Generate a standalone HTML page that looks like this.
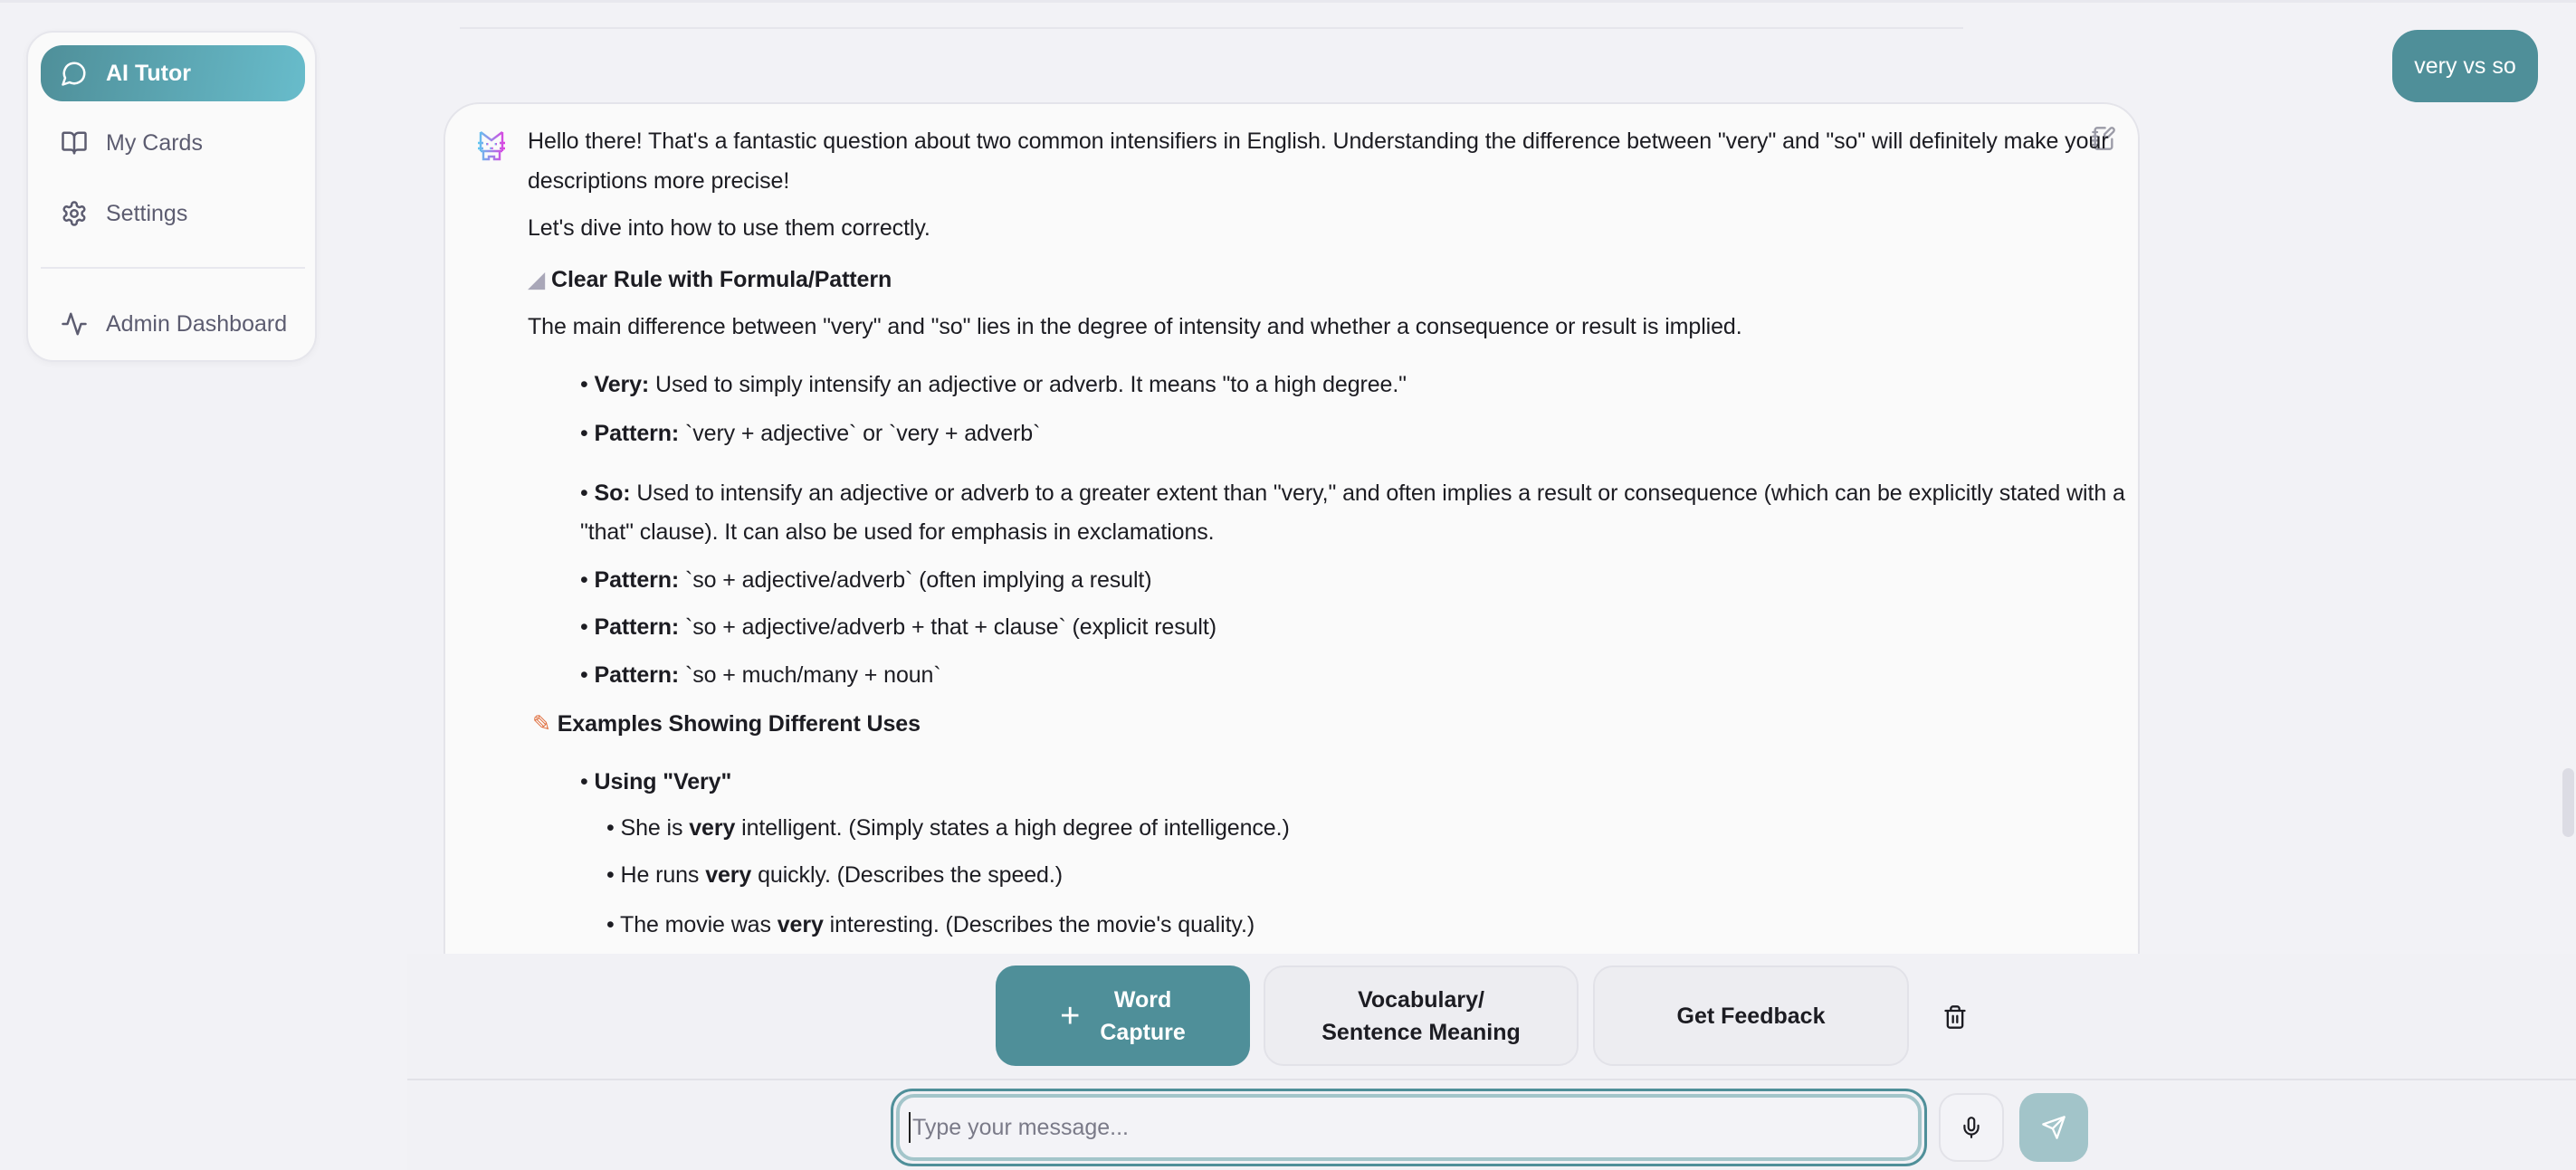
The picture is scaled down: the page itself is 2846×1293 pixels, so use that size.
<!DOCTYPE html>
<html><head><meta charset="utf-8"><style>
*{margin:0;padding:0;box-sizing:border-box}
body{width:2846px;height:1293px;overflow:hidden;background:#f2f2f6;font-family:"Liberation Sans",sans-serif;color:#1c1c22;position:relative}
.abs{position:absolute}
.side{left:29px;top:34px;width:321px;height:366px;background:#fafafa;border:2px solid #e6e6ec;border-radius:30px;box-shadow:0 2px 8px rgba(0,0,0,.04)}
.nav{position:absolute;left:14px;width:292px;height:62px;border-radius:24px;display:flex;align-items:center;font-size:25px;color:#5c5c70}
.nav svg{margin-left:22px;margin-right:20px}
.act{background:linear-gradient(100deg,#4f8f99,#68bccb);color:#fff;font-weight:bold}
.card{left:490px;top:113px;width:1874px;height:1000px;background:#fafafa;border:2px solid #e4e4ea;border-radius:40px}
.l{position:absolute;white-space:nowrap;font-size:25px;line-height:36px;letter-spacing:-0.1px}
b{font-weight:bold}
.btn{position:absolute;top:1067px;height:111px;border-radius:22px;display:flex;align-items:center;justify-content:center;text-align:center;font-size:25px;line-height:36px;font-weight:bold}
</style></head><body>
<div class="abs" style="left:0;top:0;width:2846px;height:3px;background:#e8e8ee"></div>
<div class="abs" style="left:508px;top:30px;width:1661px;height:2px;background:#e6e6ec"></div>

<div class="abs side">
 <div class="nav act" style="top:14px">
  <svg width="30" height="30" viewBox="0 0 24 24" fill="none" stroke="#fff" stroke-width="2" stroke-linecap="round" stroke-linejoin="round"><path d="M7.9 20A9 9 0 1 0 4 16.1L2 22Z"/></svg>AI Tutor</div>
 <div class="nav" style="top:91px">
  <svg width="30" height="30" viewBox="0 0 24 24" fill="none" stroke="#5c5c70" stroke-width="2" stroke-linecap="round" stroke-linejoin="round"><path d="M12 7v14"/><path d="M3 18a1 1 0 0 1-1-1V4a1 1 0 0 1 1-1h5a4 4 0 0 1 4 4 4 4 0 0 1 4-4h5a1 1 0 0 1 1 1v13a1 1 0 0 1-1 1h-6a3 3 0 0 0-3 3 3 3 0 0 0-3-3z"/></svg>My Cards</div>
 <div class="nav" style="top:169px">
  <svg width="30" height="30" viewBox="0 0 24 24" fill="none" stroke="#5c5c70" stroke-width="2" stroke-linecap="round" stroke-linejoin="round"><path d="M12.22 2h-.44a2 2 0 0 0-2 2v.18a2 2 0 0 1-1 1.730l-.43.25a2 2 0 0 1-2 0l-.15-.08a2 2 0 0 0-2.73.73l-.22.38a2 2 0 0 0 .73 2.73l.15.1a2 2 0 0 1 1 1.72v.51a2 2 0 0 1-1 1.74l-.15.09a2 2 0 0 0-.73 2.73l.22.38a2 2 0 0 0 2.73.73l.15-.08a2 2 0 0 1 2 0l.43.25a2 2 0 0 1 1 1.73V20a2 2 0 0 0 2 2h.44a2 2 0 0 0 2-2v-.18a2 2 0 0 1 1-1.73l.43-.25a2 2 0 0 1 2 0l.15.08a2 2 0 0 0 2.73-.73l.22-.39a2 2 0 0 0-.73-2.73l-.15-.08a2 2 0 0 1-1-1.74v-.5a2 2 0 0 1 1-1.74l.15-.09a2 2 0 0 0 .73-2.73l-.22-.38a2 2 0 0 0-2.73-.73l-.15.08a2 2 0 0 1-2 0l-.43-.25a2 2 0 0 1-1-1.73V4a2 2 0 0 0-2-2z"/><circle cx="12" cy="12" r="3"/></svg>Settings</div>
 <div class="abs" style="left:14px;top:259px;width:292px;height:2px;background:#e8e8ee"></div>
 <div class="nav" style="top:291px">
  <svg width="30" height="30" viewBox="0 0 24 24" fill="none" stroke="#5c5c70" stroke-width="2" stroke-linecap="round" stroke-linejoin="round"><path d="M22 12h-4l-3 9L9 3l-3 9H2"/></svg>Admin Dashboard</div>
</div>

<div class="abs" style="left:2643px;top:33px;width:161px;height:80px;background:#4f8f99;border-radius:28px;color:#fff;font-size:25px;display:flex;align-items:center;justify-content:center">very vs so</div>

<div class="abs card"></div>
<svg class="abs" style="left:522px;top:140px" width="42" height="42" viewBox="0 0 14 14">
 <defs><linearGradient id="g" x1="0" x2="1"><stop offset="0" stop-color="#5cc8f0"/><stop offset="1" stop-color="#e040e0"/></linearGradient></defs>
 <g fill="none" stroke="url(#g)" stroke-width="0.8">
 <path d="M3 2v7M11 2v7M3 2l4 3 4-3M3 9h8M4 9v3h2v-1h2v1h2V9M2 6h2M10 6h2M2 8h2M10 8h2"/>
 </g><g fill="url(#g)"><rect x="5" y="6" width="0.8" height="0.8"/><rect x="8.2" y="6" width="0.8" height="0.8"/><rect x="6.4" y="7.6" width="1.2" height="0.7"/></g>
</svg>
<svg class="abs" style="left:2310px;top:138px" width="28" height="30" viewBox="0 0 24 24" fill="none" stroke="#9a9aa6" stroke-width="2" stroke-linecap="round" stroke-linejoin="round"><path d="M13.4 2H6a2 2 0 0 0-2 2v16a2 2 0 0 0 2 2h12a2 2 0 0 0 2-2v-7.4"/><path d="M2 6h4M2 10h4M2 14h4M2 18h4"/><path d="M21.4 5.6a2.1 2.1 0 1 0-3-3L13 8v3h3z"/></svg>

<div class="l" style="left:583px;top:138px">Hello there! That's a fantastic question about two common intensifiers in English. Understanding the difference between "very" and "so" will definitely make your</div>
<div class="l" style="left:583px;top:182px">descriptions more precise!</div>
<div class="l" style="left:583px;top:234px">Let's dive into how to use them correctly.</div>
<div class="l" style="left:583px;top:291px"><span style="color:#a9a7b8">&#9698;</span>&nbsp;<b>Clear Rule with Formula/Pattern</b></div>
<div class="l" style="left:583px;top:343px">The main difference between "very" and "so" lies in the degree of intensity and whether a consequence or result is implied.</div>
<div class="l" style="left:641px;top:407px">• <b>Very:</b> Used to simply intensify an adjective or adverb. It means "to a high degree."</div>
<div class="l" style="left:641px;top:461px">• <b>Pattern:</b> `very + adjective` or `very + adverb`</div>
<div class="l" style="left:641px;top:527px">• <b>So:</b> Used to intensify an adjective or adverb to a greater extent than "very," and often implies a result or consequence (which can be explicitly stated with a</div>
<div class="l" style="left:641px;top:570px">"that" clause). It can also be used for emphasis in exclamations.</div>
<div class="l" style="left:641px;top:623px">• <b>Pattern:</b> `so + adjective/adverb` (often implying a result)</div>
<div class="l" style="left:641px;top:675px">• <b>Pattern:</b> `so + adjective/adverb + that + clause` (explicit result)</div>
<div class="l" style="left:641px;top:728px">• <b>Pattern:</b> `so + much/many + noun`</div>
<div class="l" style="left:588px;top:782px"><span style="color:#e07040">&#9998;</span>&nbsp;<b>Examples Showing Different Uses</b></div>
<div class="l" style="left:641px;top:846px">• <b>Using "Very"</b></div>
<div class="l" style="left:670px;top:897px">• She is <b>very</b> intelligent. (Simply states a high degree of intelligence.)</div>
<div class="l" style="left:670px;top:949px">• He runs <b>very</b> quickly. (Describes the speed.)</div>
<div class="l" style="left:670px;top:1004px">• The movie was <b>very</b> interesting. (Describes the movie's quality.)</div>

<div class="abs" style="left:450px;top:1054px;width:2396px;height:239px;background:#f1f1f5"></div>
<div class="btn" style="left:1100px;width:281px;background:#4f8f99;color:#fff"><span style="font-size:38px;font-weight:normal;margin-right:22px">+</span><span>Word<br>Capture</span></div>
<div class="btn" style="left:1396px;width:348px;background:#ededf1;border:2px solid #e2e2e8">Vocabulary/<br>Sentence Meaning</div>
<div class="btn" style="left:1760px;width:349px;background:#ededf1;border:2px solid #e2e2e8">Get Feedback</div>
<svg class="abs" style="left:2146px;top:1108px" width="28" height="32" viewBox="0 0 24 24" fill="none" stroke="#1c1c22" stroke-width="2" stroke-linecap="round" stroke-linejoin="round"><path d="M3 6h18M19 6v14a2 2 0 0 1-2 2H7a2 2 0 0 1-2-2V6M8 6V4a2 2 0 0 1 2-2h4a2 2 0 0 1 2 2v2M10 11v6M14 11v6"/></svg>
<div class="abs" style="left:450px;top:1192px;width:2396px;height:2px;background:#e2e2e8"></div>

<div class="abs" style="left:984px;top:1203px;width:1145px;height:86px;border:3px solid #4f8f99;border-radius:24px;padding:3px"><div style="width:100%;height:100%;border:4px solid #a3c5ca;border-radius:20px;background:#f3f3f7;display:flex;align-items:center;padding-left:10px;font-size:25px;color:#7a7a88"><span style="width:2px;height:34px;background:#222;margin-right:2px"></span>Type your message...</div></div>
<div class="abs" style="left:2142px;top:1208px;width:72px;height:76px;border:2px solid #e2e2e8;border-radius:20px;background:#f3f3f7;display:flex;align-items:center;justify-content:center"><svg width="26" height="30" viewBox="0 0 24 24" fill="none" stroke="#1c1c22" stroke-width="2" stroke-linecap="round"><path d="M12 2a3 3 0 0 0-3 3v7a3 3 0 0 0 6 0V5a3 3 0 0 0-3-3z"/><path d="M19 10v2a7 7 0 0 1-14 0v-2M12 19v3"/></svg></div>
<div class="abs" style="left:2231px;top:1208px;width:76px;height:76px;border-radius:20px;background:#a2c4c9;display:flex;align-items:center;justify-content:center"><svg width="28" height="28" viewBox="0 0 24 24" fill="none" stroke="#fff" stroke-width="2" stroke-linecap="round" stroke-linejoin="round"><path d="M22 2 11 13M22 2l-7 20-4-9-9-4z"/></svg></div>

<div class="abs" style="left:2831px;top:849px;width:13px;height:76px;border-radius:7px;background:#dcdce4"></div>
</body></html>
